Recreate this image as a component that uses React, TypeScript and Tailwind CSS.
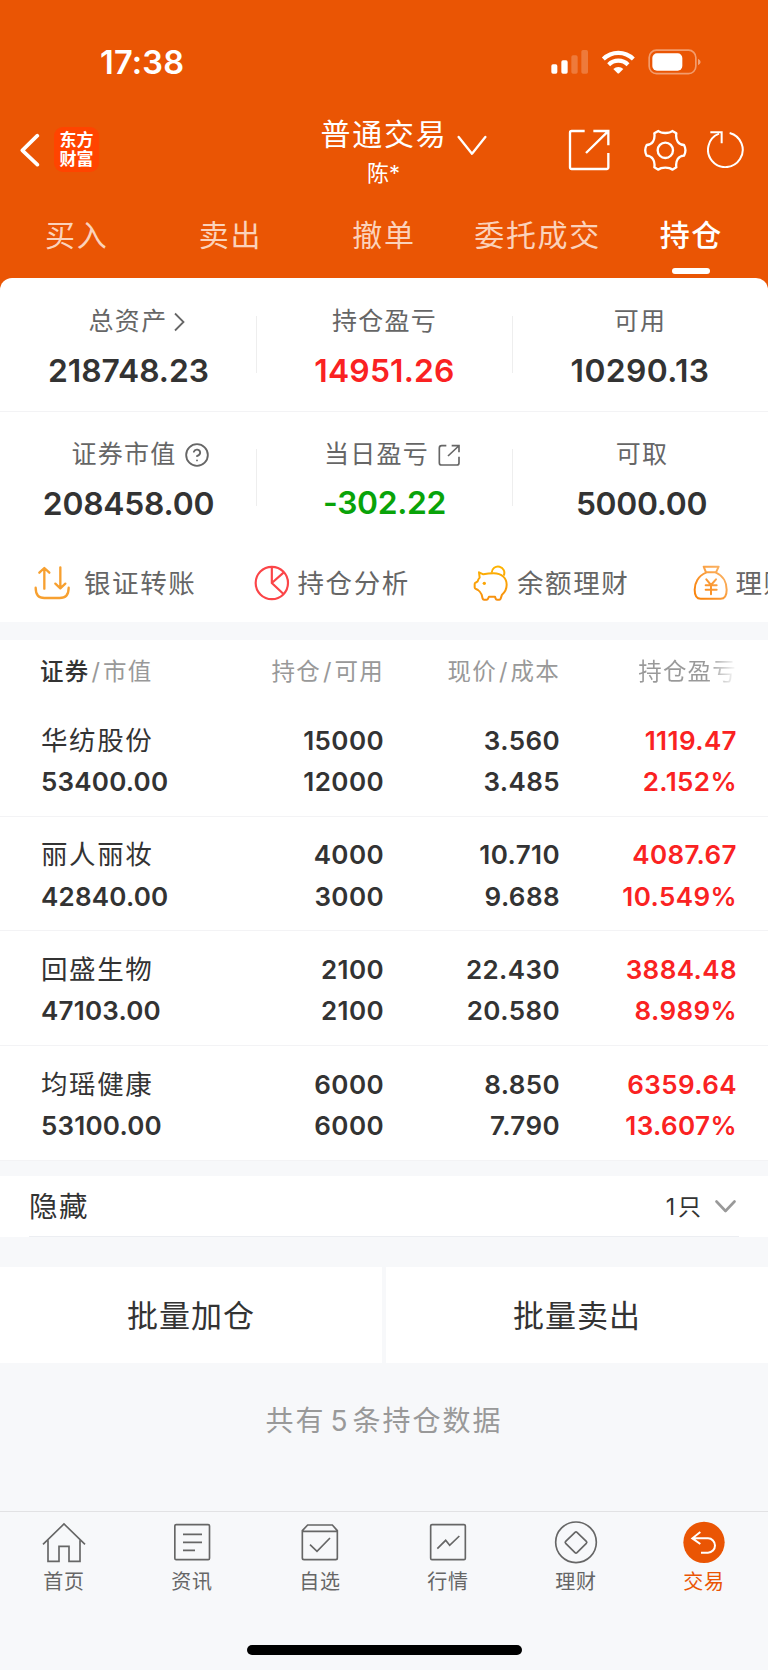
import React from "react";
import { CircleHelp } from "lucide-react";

interface Holding {
  name: string;
  value: string;
  amount: string;
  available: string;
  price: string;
  cost: string;
  profit: string;
  rate: string;
}

const holdings: Holding[] = [
  { name: "华纺股份", value: "53400.00", amount: "15000", available: "12000", price: "3.560", cost: "3.485", profit: "1119.47", rate: "2.152%" },
  { name: "丽人丽妆", value: "42840.00", amount: "4000", available: "3000", price: "10.710", cost: "9.688", profit: "4087.67", rate: "10.549%" },
  { name: "回盛生物", value: "47103.00", amount: "2100", available: "2100", price: "22.430", cost: "20.580", profit: "3884.48", rate: "8.989%" },
  { name: "均瑶健康", value: "53100.00", amount: "6000", available: "6000", price: "8.850", cost: "7.790", profit: "6359.64", rate: "13.607%" },
];

const tabs = ["买入", "卖出", "撤单", "委托成交", "持仓"];

const StatusIcons = () => (
  <svg width="150" height="26" viewBox="500 148 450 78" fill="white">
    <rect x="501" y="194" width="18" height="28" rx="5" />
    <rect x="531" y="182" width="19" height="40" rx="5" />
    <rect x="561" y="167" width="19" height="55" rx="5" opacity="0.22" />
    <rect x="591" y="151" width="20" height="71" rx="5" opacity="0.22" />
    <g fill="none" stroke="white" strokeWidth="12.500">
      <path d="M657 178a64 64 0 0 1 90 0" />
      <path d="M673 195a41 41 0 0 1 58 0" />
    </g>
    <path d="M687 208a21 21 0 0 1 30 0l-12 12q-3 3-6 0z" />
    <rect x="794.5" y="151.500" width="140" height="70.500" rx="22" fill="none" stroke="white" strokeWidth="5" opacity="0.42" />
    <rect x="804" y="161" width="90" height="52" rx="14" />
    <path d="M941 177q8 4 8 10t-8 10z" opacity="0.45" />
  </svg>
);

const BackIcon = () => (
  <svg width="20" height="34" viewBox="60 398 60 102" fill="none" stroke="white" strokeWidth="11" strokeLinecap="round" strokeLinejoin="round">
    <path d="M112 406L67 450l45 43" />
  </svg>
);

const ShareIcon = () => (
  <svg width="42" height="42" viewBox="553 389 126 126" fill="none" stroke="white" strokeWidth="7">
    <path d="M603 395H564q-5 0-5 5v104q0 5 5 5h105q5 0 5-5v-43" />
    <path d="M629 395h45v43M607 461l66-65" />
  </svg>
);

const GearIcon = () => (
  <svg width="43" height="43" viewBox="781 385 129 129" fill="none" stroke="white" strokeWidth="7" strokeLinejoin="round">
    <circle cx="845" cy="449" r="23" />
    <path d="M824 391C833 399 857 399 866 391L878 398C875 418 884 432 901 433C907 444 907 454 901 465C884 466 875 480 878 500L866 507C857 499 833 499 824 507L812 500C815 480 806 466 789 465C783 454 783 444 789 433C806 432 815 418 812 398Z" />
  </svg>
);

const RefreshIcon = () => (
  <svg width="38" height="38" viewBox="968 391 114 114" fill="none" stroke="white" strokeWidth="6">
    <path d="M1036 400A52 52 0 1 1 1004 402" />
    <path d="M978 397.500h34v33" />
  </svg>
);

const SmallShareIcon = () => (
  <svg width="23" height="23" viewBox="162 488 69 69" fill="none" stroke="#666" strokeWidth="5">
    <path d="M187 493h-14q-7 0-7 7v44q0 7 7 7h45q7 0 7-7v-18M203 493h22v20M192 524l32-30" />
  </svg>
);

const TransferIcon = () => (
  <svg width="36" height="36" viewBox="103 856 108 108" fill="none" stroke="#f7a030" strokeWidth="7" strokeLinecap="round" strokeLinejoin="round">
    <path d="M134 927v-61M119 879l15-14 15 14M182 863v62M167 912l15 14 15-14" />
    <path d="M108 924c0 20 8 31 26 31h46c18 0 27-11 27-31" />
  </svg>
);

const PieIcon = () => (
  <svg width="36" height="36" viewBox="763 856 108 108" fill="none" stroke="#fb4548" strokeWidth="6.500">
    <circle cx="816.5" cy="910" r="48.500" />
    <path d="M816.500 861v49l35 33M816.500 910l35-31" />
  </svg>
);

const PiggyIcon = () => (
  <svg width="36" height="36" viewBox="268 856 108 108" fill="none" stroke="url(#piggy)" strokeWidth="6" strokeLinejoin="round">
    <defs>
      <linearGradient id="piggy" x1="320" y1="858" x2="320" y2="962" gradientUnits="userSpaceOnUse">
        <stop stopColor="#fdb400" />
        <stop offset="1" stopColor="#f78f10" />
      </linearGradient>
    </defs>
    <path d="M286 878l13 6c10-2 20-3 31-3 25 0 39 15 39 34 0 14-6 23-14 30l-4 12q-1 3-4 3h-7q-3 0-4-3l-2-6h-18l-3 6q-1 3-4 3h-8q-3 0-4-3l-3-12c-3-6-6-11-11-14l-8-4q-2-1-2-4v-10q0-3 3-4l6-4c1-5 3-8 6-11z" />
    <path d="M324 879a19 19 0 1 1 36 9" />
    <circle cx="302" cy="911" r="5" fill="#fba505" stroke="none" />
  </svg>
);

const MoneyBagIcon = () => (
  <svg width="36" height="36" viewBox="925 856 108 108" fill="none" stroke="url(#bag)" strokeWidth="6" strokeLinejoin="round" strokeLinecap="round">
    <defs>
      <linearGradient id="bag" x1="930" y1="930" x2="1010" y2="860" gradientUnits="userSpaceOnUse">
        <stop stopColor="#f9850f" />
        <stop offset="1" stopColor="#fbb467" />
      </linearGradient>
    </defs>
    <path d="M957 861h45l-8 17h-30z" />
    <path d="M964 879c-24 10-34 32-34 51 0 18 6 27 18 27h60c12 0 18-9 18-27 0-19-9-41-32-51" />
    <path d="M965 899l14 17 15-17M979 916v28M963 917h33M963 930h33" />
  </svg>
);

const shortcuts = [
  { label: "银证转账", icon: <TransferIcon />, gap: "gap-[14px]" },
  { label: "持仓分析", icon: <PieIcon />, gap: "gap-2" },
  { label: "余额理财", icon: <PiggyIcon />, gap: "gap-2" },
  { label: "理财", icon: <MoneyBagIcon />, gap: "gap-[7px]" },
];

const navItems = [
  {
    label: "首页",
    viewBox: "127 88 132 132",
    icon: <path d="M130 161l63-61 63 61M145 149v63h33v-45h30v45h33v-63" />,
  },
  {
    label: "资讯",
    viewBox: "510 88 132 132",
    icon: (
      <>
        <rect x="524.5" y="102" width="104" height="105" rx="4" />
        <path d="M549 131h57M549 155h57M549 179h36" />
      </>
    ),
  },
  {
    label: "自选",
    viewBox: "894 88 132 132",
    icon: (
      <>
        <path d="M923 103h74l15 17v82q0 5-5 5h-95q-5 0-5-5v-82zM907 122h105" />
        <path d="M930 162l21 20 39-40" />
      </>
    ),
  },
  {
    label: "行情",
    viewBox: "126 88 132 132",
    icon: (
      <>
        <rect x="140" y="102" width="104" height="105" rx="4" />
        <path d="M160 174l25-25 12 15 29-28" />
      </>
    ),
  },
  {
    label: "理财",
    viewBox: "510 88 132 132",
    icon: (
      <>
        <circle cx="576" cy="155" r="61" />
        <path d="M573 125q3-3 6 0l28 27q3 3 0 6l-28 28q-3 3-6 0l-28-28q-3-3 0-6z" />
      </>
    ),
  },
];

const Header = () => (
  <header className="h-[278px] text-white">
    <div className="flex h-[108px] items-start justify-between pr-[67px] pl-[100px] pt-[43px]">
      <span className="text-[32.500px] leading-10 font-semibold tracking-[0.2px]">17:38</span>
      <div className="pt-[6px]">
        <StatusIcons />
      </div>
    </div>
    <div className="flex h-[84px] items-start">
      <div className="flex w-[320px] items-center pt-[19px] pl-5">
        <BackIcon />
        <div className="ml-[14px] flex size-[45px] flex-col items-center justify-center rounded-[9px] bg-[#ff4400] text-[17px] leading-[19px] font-bold">
          <span>东方</span>
          <span>财富</span>
        </div>
      </div>
      <div className="flex w-[126px] flex-col items-center whitespace-nowrap pt-[6px]">
        <h1 className="pl-[2px] text-[30px] leading-10 tracking-[1.700px]">普通交易</h1>
        <span className="pl-px text-[22px] leading-[39px]">陈*</span>
      </div>
      <svg className="mt-[27px] ml-[11px]" width="30" height="20" viewBox="220 406 90 60" fill="none" stroke="white" strokeWidth="7" strokeLinecap="round" strokeLinejoin="round">
        <path d="M225 412l40 50 40-50" />
      </svg>
      <div className="flex items-start pt-[21px] pl-[81px]">
        <ShareIcon />
        <div className="ml-[34px]">
          <GearIcon />
        </div>
        <div className="mt-px ml-[20px]">
          <RefreshIcon />
        </div>
      </div>
    </div>
    <nav className="grid grid-cols-5 pt-[23px]">
      {tabs.map((tab) => (
        <div key={tab} className="flex flex-col items-center whitespace-nowrap">
          <span className={tab === "持仓" ? "text-[30px] leading-10 font-medium tracking-[1.500px]" : "text-[30px] leading-10 tracking-[1.700px] text-[#fbd2bb]"}>
            {tab}
          </span>
          {tab === "持仓" && <div className="mt-[13px] h-[6px] w-[38px] rounded-[3px] bg-white" />}
        </div>
      ))}
    </nav>
  </header>
);

interface StatProps {
  label: string;
  value: string;
  icon?: React.ReactNode;
  labelClass?: string;
  valueClass?: string;
  divider?: boolean;
}

const Stat = ({ label, value, icon, labelClass = "", valueClass = "text-[#333]", divider = true }: StatProps) => (
  <div className="flex items-start">
    <div className="flex flex-1 flex-col items-center pl-px">
      <div className={`flex h-10 items-center text-[25px] tracking-[1.300px] text-[#666] ${labelClass}`}>
        {label}
        {icon}
      </div>
      <div className={`mt-[9px] text-[31.800px] leading-10 font-semibold ${valueClass}`}>{value}</div>
    </div>
    <div className={divider ? "-mr-px mt-[14px] h-[57px] w-px bg-[#eee]" : "w-px"} />
  </div>
);

const Summary = () => (
  <section className="rounded-t-[12px] bg-white">
    <div className="grid h-[134px] grid-cols-3 border-b border-[#f3f3f5] pt-[24px]">
      <Stat
        label="总资产"
        value="218748.23"
        labelClass="pl-[17px]"
        icon={
          <svg className="ml-[7px]" width="11" height="20" viewBox="0 0 11 20" fill="none" stroke="#666" strokeWidth="1.8">
            <path d="M1 1.500L9.500 10 1 18.500" />
          </svg>
        }
      />
      <Stat label="持仓盈亏" value="14951.26" valueClass="tracking-[0.200px] text-[#fa2222]" />
      <Stat label="可用" value="10290.13" divider={false} valueClass="tracking-[0.400px] text-[#333]" />
    </div>
    <div className="grid h-[130px] grid-cols-3 pt-[23px]">
      <Stat
        label="证券市值"
        value="208458.00"
        labelClass="pl-[24px]"
        valueClass="tracking-[-0.200px] text-[#333]"
        icon={<CircleHelp className="ml-[7px]" size={26} strokeWidth={1.7} color="#666" />}
      />
      <Stat label="当日盈亏" value="-302.22" labelClass="pl-[16px]" valueClass="-translate-y-px tracking-[-0.300px] text-[#09a309]" icon={<div className="ml-[9px]"><SmallShareIcon /></div>} />
      <Stat label="可取" value="5000.00" labelClass="pl-[4px]" valueClass="pl-[3px] tracking-[-0.300px] text-[#333]" divider={false} />
    </div>
    <div className="flex h-20 items-center overflow-hidden pt-[2px] pl-[34px]">
      {shortcuts.map((item) => (
        <div key={item.label} className={`flex w-[219.500px] shrink-0 items-center text-[26.500px] tracking-[1.600px] whitespace-nowrap text-[#666] ${item.gap}`}>
          {item.icon}
          <span className="mt-[2px]">{item.label}</span>
        </div>
      ))}
    </div>
  </section>
);

const cols = "grid grid-cols-[183px_160px_176px_177px] pl-[41px] pr-[31px]";

const HoldingsTable = () => (
  <section className="bg-white">
    <div className={`${cols} h-[62.500px] items-center pt-[2px] text-[23.500px] tracking-[1.200px] text-[#999]`}>
      <div className="-ml-px flex gap-[2px]">
        <span className="font-medium text-[#333]">证券</span>
        <span>/</span>
        <span>市值</span>
      </div>
      <div className="flex justify-end gap-px"><span>持仓</span><span className="px-px">/</span><span>可用</span></div>
      <div className="flex justify-end gap-px"><span>现价</span><span className="px-px">/</span><span>成本</span></div>
      <div className="flex justify-end">
        <span className="bg-linear-to-r from-[#999] from-70% to-white bg-clip-text text-transparent">持仓盈亏</span>
      </div>
    </div>
    {holdings.map((h) => (
      <div key={h.name} className={`${cols} h-[114.670px] border-b border-[#f3f3f5] pt-[17.800px] text-right text-[26px] leading-[41.300px] font-semibold tracking-[0.400px] text-[#333]`}>
        <div className="text-left">
          <div className="text-[26.500px] font-normal tracking-[1.600px]">{h.name}</div>
          <div className="tracking-[0.200px]">{h.value}</div>
        </div>
        <div>
          <div>{h.amount}</div>
          <div>{h.available}</div>
        </div>
        <div>
          <div>{h.price}</div>
          <div>{h.cost}</div>
        </div>
        <div className="text-[#fa2222]">
          <div>{h.profit}</div>
          <div>{h.rate}</div>
        </div>
      </div>
    ))}
  </section>
);

const BottomNav = () => (
  <footer className="h-[159px] border-t border-[#e2e2e4] bg-[#f7f8fa]">
    <div className="grid grid-cols-6 pt-2">
      {navItems.map((item) => (
        <div key={item.label} className="flex flex-col items-center text-[#666]">
          <svg width="44" height="44" viewBox={item.viewBox} fill="none" stroke="currentColor" strokeWidth="5">
            {item.icon}
          </svg>
          <span className="mt-[2px] text-[20px] leading-8 tracking-[0.800px]">{item.label}</span>
        </div>
      ))}
      <div className="flex flex-col items-center text-[#ea5504]">
        <svg width="44" height="44" viewBox="894 88 132 132" fill="none" stroke="white" strokeWidth="6">
          <circle cx="960" cy="155" r="62" fill="#ea5504" stroke="none" />
          <path d="M951 186h21a21 21.500 0 0 0 0-43h-46M949 124l-24 19 24 17" />
        </svg>
        <span className="mt-[2px] text-[20px] leading-8 tracking-[0.800px]">交易</span>
      </div>
    </div>
    <div className="mx-auto mt-[47px] h-[10px] w-[275px] rounded-full bg-black" />
  </footer>
);

const App = () => {
  return (
    <div className="h-[1670px] w-[768px] overflow-hidden bg-[#f7f8fa] font-['Inter','Noto_Sans_CJK_SC',sans-serif]">
      <div className="bg-[#ea5504]">
        <Header />
        <Summary />
      </div>
      <div className="h-[17.500px]" />
      <HoldingsTable />
      <div className="mt-[15.800px] h-[61px] bg-white pl-[29px]">
        <div className="flex h-full w-[710px] items-center border-b border-[#eceef2] text-[#333]">
          <span className="flex-1 pt-[2px] text-[28.500px] tracking-[1.500px]">隐藏</span>
          <span className="pt-px text-[23px] tracking-[1px]">1<span className="ml-[2px]">只</span></span>
          <svg className="mr-[3px] ml-[13px]" width="21" height="13" viewBox="0 0 21 13" fill="none" stroke="#999" strokeWidth="2.600" strokeLinecap="round" strokeLinejoin="round">
            <path d="M1.500 1.500l9 9.500 9-9.500" />
          </svg>
        </div>
      </div>
      <div className="mt-[30px] grid h-24 grid-cols-2 gap-1 text-[31px] tracking-[1px] text-[#333]">
        <div className="flex items-center justify-center bg-white pt-[2px]">批量加仓</div>
        <div className="flex items-center justify-center bg-white pt-[2px]">批量卖出</div>
      </div>
      <div className="flex h-[148px] items-start justify-center gap-[6px] pt-[38px] text-[28px] leading-10 tracking-[2px] text-[#999]">
        <span>共有</span>
        <span className="-ml-px">5</span>
        <span className="-ml-[3px]">条持仓数据</span>
      </div>
      <BottomNav />
    </div>
  );
};

export default App;
